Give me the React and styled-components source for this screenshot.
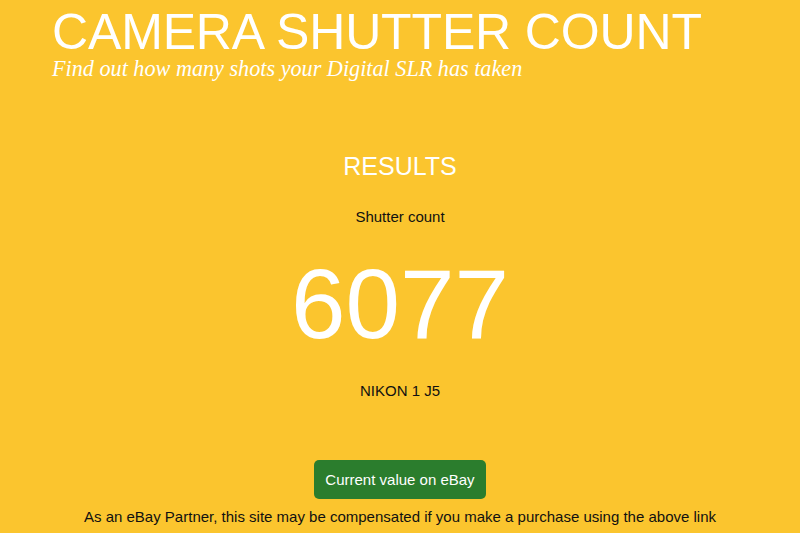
import React from "react";
import styled, { createGlobalStyle } from "styled-components";

const GlobalStyle = createGlobalStyle`
  html, body {
    margin: 0;
    padding: 0;
    background: #fbc52e;
  }
  body {
    font-family: "Liberation Sans", Arial, sans-serif;
  }
`;

const Page = styled.div`
  min-height: 533px;
  background: #fbc52e;
  overflow: hidden;
`;

const Header = styled.header`
  padding: 7px 0 0 52px;
`;

const Title = styled.h1`
  margin: 0;
  font-size: 50px;
  font-weight: normal;
  line-height: 50px;
  color: #fff;
  letter-spacing: -0.15px;
`;

const Tagline = styled.p`
  margin: 1px 0 0 0;
  font-family: "Liberation Serif", Georgia, serif;
  font-style: italic;
  font-size: 22.2px;
  line-height: 22px;
  color: #fff;
`;

const Results = styled.section`
  display: flex;
  flex-direction: column;
  align-items: center;
  padding-top: 71px;
  text-align: center;
`;

const Heading = styled.h2`
  margin: 0;
  font-size: 25px;
  font-weight: normal;
  line-height: 30px;
  color: #fff;
`;

const Label = styled.div`
  margin-top: ${(p) => p.$gap}px;
  font-size: 15px;
  line-height: 18px;
  color: #111;
`;

const Count = styled.div`
  margin-top: 23px;
  font-size: 98px;
  line-height: 110px;
  color: #fff;
`;

const EbayButton = styled.a`
  display: inline-flex;
  align-items: center;
  justify-content: center;
  margin-top: 60px;
  width: 172px;
  height: 39px;
  border-radius: 5px;
  background: #2b7d2d;
  color: #fff;
  font-size: 15px;
  text-decoration: none;
`;

const Disclaimer = styled.p`
  margin: 9px 0 0 0;
  font-size: 15px;
  line-height: 18px;
  color: #111;
`;

const App = () => {
  return (
    <Page>
      <GlobalStyle />
      <Header>
        <Title>CAMERA SHUTTER COUNT</Title>
        <Tagline>Find out how many shots your Digital SLR has taken</Tagline>
      </Header>
      <Results>
        <Heading>RESULTS</Heading>
        <Label $gap={27}>Shutter count</Label>
        <Count>6077</Count>
        <Label $gap={23}>NIKON 1 J5</Label>
        <EbayButton href="#">Current value on eBay</EbayButton>
        <Disclaimer>
          As an eBay Partner, this site may be compensated if you make a purchase
          using the above link
        </Disclaimer>
      </Results>
    </Page>
  );
};

export default App;
